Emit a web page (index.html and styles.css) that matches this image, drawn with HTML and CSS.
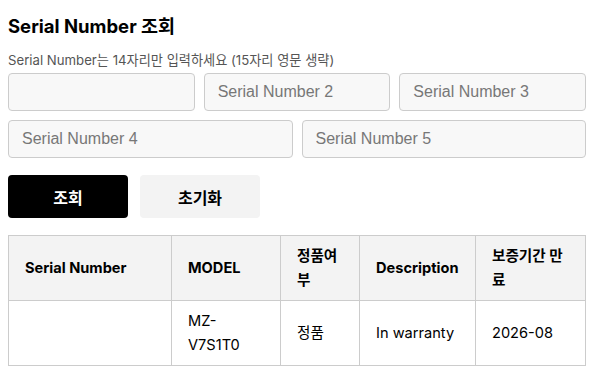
FILE: index.html
```html
<!DOCTYPE html>
<html>

<head>
    <meta charset="UTF-8">
    <link rel="stylesheet" href="styles.css">
</head>

<body>
    <div id="serial_check">
        <h2 class="title">Serial Number 조회</h2>
        <p class="guide">Serial Number는 14자리만 입력하세요 (15자리 영문 생략)</p>
        <div class="input_row three">
            <input type="text" class="sn_input" value="" />
            <input type="text" class="sn_input" placeholder="Serial Number 2" />
            <input type="text" class="sn_input" placeholder="Serial Number 3" />
        </div>
        <div class="input_row two">
            <input type="text" class="sn_input" placeholder="Serial Number 4" />
            <input type="text" class="sn_input" placeholder="Serial Number 5" />
        </div>
        <div class="btn_row">
            <button class="btn btn_black">조회</button>
            <button class="btn btn_gray">초기화</button>
        </div>
        <table class="result">
            <colgroup>
                <col style="width:163px">
                <col style="width:109px">
                <col style="width:79px">
                <col style="width:116px">
                <col>
            </colgroup>
            <thead>
                <tr>
                    <th>Serial Number</th>
                    <th>MODEL</th>
                    <th>정품여부</th>
                    <th>Description</th>
                    <th>보증기간 만료</th>
                </tr>
            </thead>
            <tbody>
                <tr>
                    <td></td>
                    <td>MZ-V7S1T0</td>
                    <td>정품</td>
                    <td>In warranty</td>
                    <td>2026-08</td>
                </tr>
            </tbody>
        </table>
    </div>
</body>

</html>
```

FILE: styles.css
```css
body {
    margin: 8px;
    padding: 0;
    background-color: #ffffff;
    font-family: Inter, "Noto Sans CJK KR", sans-serif;
    color: #000000;
}

#serial_check {
    width: 578px;
}

#serial_check .title {
    margin: 6px 0 12px;
    font-size: 18.5px;
    line-height: 24px;
    font-weight: bold;
}

#serial_check .guide {
    margin: 0 0 3px;
    font-size: 13.2px;
    line-height: 20px;
    color: #555555;
}

.input_row {
    display: grid;
    gap: 9px;
    margin-bottom: 9px;
}

.input_row.three {
    grid-template-columns: 1fr 1fr 1fr;
}

.input_row.two {
    grid-template-columns: 1fr 1fr;
}

.sn_input {
    box-sizing: border-box;
    width: 100%;
    height: 38px;
    padding: 0 13px;
    font-size: 16px;
    font-family: "Liberation Sans", Arial, sans-serif;
    background-color: #f8f8f8;
    border: 1px solid #cccccc;
    border-radius: 4px;
    outline: none;
}

.sn_input::placeholder {
    color: #777777;
}

.btn_row {
    display: flex;
    gap: 12px;
    margin-top: 17px;
}

.btn {
    width: 120px;
    height: 43px;
    border: none;
    border-radius: 4px;
    font-size: 16px;
    font-weight: bold;
    font-family: Inter, "Noto Sans CJK KR", sans-serif;
}

.btn_black {
    background-color: #000000;
    color: #ffffff;
}

.btn_gray {
    background-color: #f3f3f3;
    color: #000000;
}

.result {
    margin-top: 17px;
    width: 578px;
    border-collapse: collapse;
    table-layout: fixed;
    font-size: 14.6px;
    line-height: 24px;
}

.result th,
.result td {
    border: 1px solid #cccccc;
    padding: 8px 16px;
    text-align: left;
    height: 48px;
}

.result th {
    background-color: #f3f3f3;
    font-weight: bold;
}
```
